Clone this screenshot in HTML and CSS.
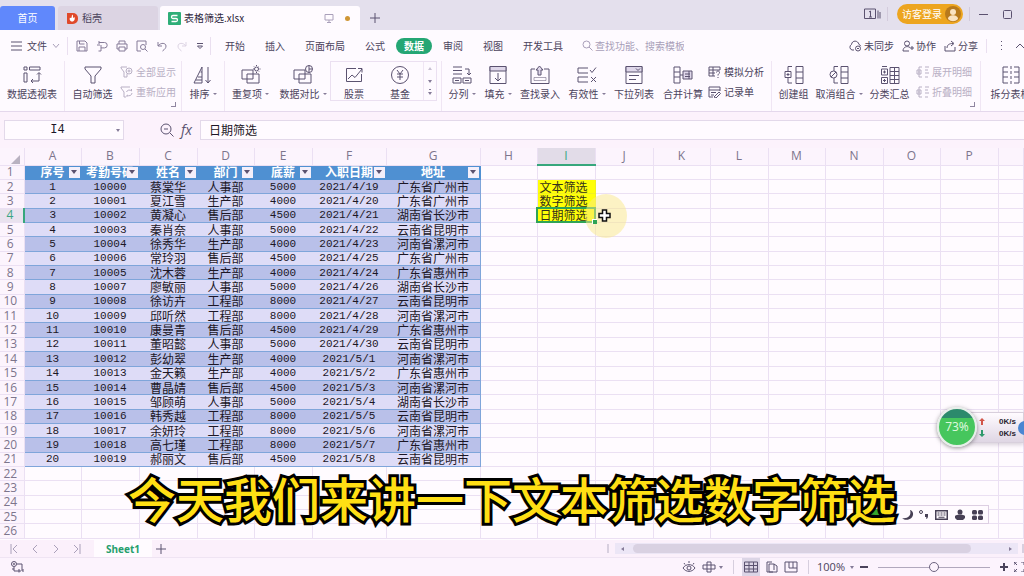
FILE: index.html
```html
<!DOCTYPE html>
<html lang="zh-CN">
<head>
<meta charset="utf-8">
<title>表格筛选.xlsx</title>
<link rel="stylesheet" href="styles.css">
</head>
<body>
<header class="titlebar">
  <button class="tab home">首页</button>
  <button class="tab docer">
    <svg width="11" height="12" viewBox="0 0 11 12"><path d="M0 1h6a5 5 0 0 1 5 5v1a5 5 0 0 1-5 5H1a1 1 0 0 1-1-1z" fill="#e0492a"/><path class="w" d="M5.5 2.5c1 1.500 0 2.500 1 3.500l1-1c.8 2-.2 4.500-2.200 4.500S2 7.500 3 5.500c.8.800 1 .8 1.500 0s0-2 1-3z"/></svg>
    稻壳
  </button>
  <button class="tab doc">
    <svg width="13" height="13" viewBox="0 0 13 13"><rect width="13" height="13" rx="1" fill="#2fae78"/><path d="M9.500 3.500H5a1.500 1.500 0 0 0 0 3h3a1.500 1.500 0 0 1 0 3H3.500" fill="none" stroke="#fff" stroke-width="1.300"/></svg>
    <span>表格筛选.xlsx</span>
    <svg class="line faint push" width="10" height="10" viewBox="0 0 10 10"><path d="M1 1.500h8v5.500H1zM5 7v2M3 9.500h4"/></svg>
    <i class="unsaved"></i>
  </button>
  <button class="newtab" aria-label="新建"><svg class="line" width="10" height="10" viewBox="0 0 10 10"><path d="M5 0v10M0 5h10"/></svg></button>
  <div class="window">
    <svg class="line" width="17" height="12" viewBox="0 0 17 12"><path d="M.5 1h11v9.500H.500zM14 2.500v8M16 4v6.500M5 4l1.500-1v6M5 9h3"/></svg>
    <i class="sep"></i>
    <button class="login">访客登录
      <svg width="16" height="16" viewBox="0 0 16 16"><circle cx="8" cy="8" r="8" fill="#b87a1c"/><circle cx="8" cy="6" r="3" fill="#fbe3c0"/><path d="M3 13c0-5 10-5 10 0-3 3-7 3-10 0z" fill="#fbe3c0"/></svg>
    </button>
    <i class="sep"></i>
    <button aria-label="最小化"><svg class="line" width="9" height="9" viewBox="0 0 9 9"><path d="M0 4.500h9"/></svg></button>
    <button class="maximize" aria-label="最大化"><svg class="line" width="9" height="9" viewBox="0 0 9 9"><rect x=".5" y=".5" width="8" height="8" rx="1"/></svg></button>
  </div>
</header>

<nav class="menubar">
  <button class="file">
    <svg class="line" width="11" height="10" viewBox="0 0 11 10"><path d="M0 1h11M0 5h11M0 9h11"/></svg>
    文件
    <svg class="line faint" width="8" height="6" viewBox="0 0 8 6"><path d="M1 1l3 3.500L7 1"/></svg>
  </button>
  <div class="quick">
    <button aria-label="保存"><svg class="line soft" width="12" height="12" viewBox="0 0 12 12"><path d="M1 1h8l2 2v8H1zM3.500 1v3h5M3 11V7h6v4"/></svg></button>
    <button aria-label="输出"><svg class="line soft" width="12" height="12" viewBox="0 0 12 12"><path d="M3 2.500h5.500a2.700 2.700 0 0 1 0 5.400H5V11H2.500M1 5h3M3 1v3M5 8V5"/></svg></button>
    <button aria-label="打印"><svg class="line soft" width="12" height="12" viewBox="0 0 12 12"><path d="M3 4V1h6v3M3 9H1V4h10v5H9M3 7h6v4H3z"/></svg></button>
    <button aria-label="预览"><svg class="line soft" width="12" height="12" viewBox="0 0 12 12"><path d="M5 11H1V1h9v4"/><circle cx="7" cy="7" r="2.500"/><path d="M9 9l2.500 2.500"/></svg></button>
    <button aria-label="撤销"><svg class="line soft" width="12" height="12" viewBox="0 0 12 12"><path d="M2 2v4h4M2 6c3-4 8-3 8 0 0 2-1 3-3.500 5"/></svg></button>
    <button aria-label="恢复"><svg class="line ghost" width="12" height="12" viewBox="0 0 12 12"><path d="M10 2v4H6M10 6C7 2 2 3 2 6c0 2 1 3 3.500 5"/></svg></button>
    <button aria-label="更多"><svg class="line" width="8" height="8" viewBox="0 0 8 8"><path d="M1 1.500h6M1.500 4L4 6.500 6.500 4z"/></svg></button>
  </div>
  <div class="menus">
    <button>开始</button><button>插入</button><button>页面布局</button><button>公式</button><button class="on">数据</button><button>审阅</button><button>视图</button><button>开发工具</button>
  </div>
  <label class="search">
    <svg class="line faint" width="11" height="11" viewBox="0 0 11 11"><circle cx="4.500" cy="4.500" r="3.500"/><path d="M7 7l3.500 3.500"/></svg>
    <input type="search" aria-label="搜索" placeholder="查找功能、搜索模板">
  </label>
  <div class="share">
    <button><svg class="line" width="14" height="12" viewBox="0 0 14 12"><path d="M6 10H4a3 3 0 0 1-.5-5.500C4 0 10 0 11 4.500c1 .3 1.500 1 1.700 1.700"/><circle cx="10" cy="8.500" r="2.500"/><path d="M9 8.500h2"/></svg>未同步</button>
    <button><svg class="line" width="12" height="12" viewBox="0 0 12 12"><circle cx="5" cy="3.500" r="2.500"/><path d="M8 7.500c-3-2-7-.5-7 3.500h6M10 6v4M8 8h4"/></svg>协作</button>
    <button><svg class="line" width="12" height="12" viewBox="0 0 12 12"><path d="M1 6v5h10V7M3 8c0-3 2-4.500 6-4.500M7 1l3 2.500L7 6"/></svg>分享</button>
    <i class="sep"></i>
    <button aria-label="更多选项"><svg width="3" height="12" viewBox="0 0 3 12"><path d="M1 1h1v1H1zM1 5h1v1H1zM1 9h1v1H1z" fill="#5b5270"/></svg></button>
    <button aria-label="折叠"><svg class="line" width="8" height="6" viewBox="0 0 8 6"><path d="M0 5l4-4 4 4"/></svg></button>
  </div>
</nav>

<div class="ribbon">
  <button class="tool"><svg class="line" width="20" height="20" viewBox="0 0 20 20"><path d="M2 2h3v3H2zM7.500 2H18v3H7.500zM2 8h3v9H2zM17 8v8H9M15 9.500L17 7.500l2 2M11 14l-2 2 2 2"/></svg>数据透视表</button>
  <button class="tool cut"><svg class="line" width="20" height="20" viewBox="0 0 20 20"><path d="M2 2h16v2l-6 7v7H8v-7L2 4z"/></svg>自动筛选</button>
  <div class="stack dim corner">
    <button><svg class="line" width="13" height="12" viewBox="0 0 13 12"><path d="M7 1H1v1l3 4v5h3V8"/><circle cx="9" cy="5" r="3"/><circle cx="9" cy="5" r="1"/></svg>全部显示</button>
    <button><svg class="line" width="13" height="12" viewBox="0 0 13 12"><path d="M10 1H1v1l3 4v5h2M6.500 6a3 3 0 0 1 5-1V3M12 7a3 3 0 0 1-5 2v2"/></svg>重新应用</button>
  </div>
  <button class="tool cut"><svg class="line" width="20" height="20" viewBox="0 0 20 20"><path d="M1 18L9 2v16zM5 12h4M7.500 7H9M3 15h6M15 2v16M12.500 15l2.500 3 2.500-3"/></svg><span>排序<i class="caret"></i></span></button>
  <button class="tool cut"><svg class="line" width="20" height="20" viewBox="0 0 20 20"><path d="M1 5h11v9H1zM6 9h12v9H6z"/><circle cx="15.500" cy="4" r="2"/><path d="M15.500 0v1M15.500 7v1M12 4h1M18.500 4h1M13 1.500l.7.700M18 1.500l-.7.700M18 6.500l-.7-.7"/></svg><span>重复项<i class="caret"></i></span></button>
  <button class="tool"><svg class="line" width="20" height="20" viewBox="0 0 20 20"><path d="M1 5h11v9H1zM6 9h12v9H6z"/><circle cx="16" cy="4" r="3.500"/><path d="M16 .5v7M16 4h3"/></svg><span>数据对比<i class="caret"></i></span></button>
  <div class="gallery">
    <button class="tool"><svg class="line" width="20" height="20" viewBox="0 0 20 20"><path d="M12 3.500H2.500v13h15V9M4 14l4-4 3 2.500L18 4M14 3.500h4v4"/></svg>股票</button>
    <button class="tool"><svg class="line" width="20" height="20" viewBox="0 0 20 20"><circle cx="10" cy="10" r="8.500"/><path d="M7 5l3 4 3-4M7 9h6M7 12h6M10 9v6"/></svg>基金</button>
    <div class="spin"><button aria-label="上"><i class="caret up"></i></button><button aria-label="下"><i class="caret"></i></button><button aria-label="全部"><i class="caret bar"></i></button></div>
  </div>
  <button class="tool cut"><svg class="line" width="20" height="20" viewBox="0 0 20 20"><path d="M1 2h9M1 5.500h9M1 9h9M1 13h8v5H1zM11 13h8v5h-8zM13 4h4v6M15 8l2 2 2-2M3 15.500h4M13 15.500h4"/></svg><span>分列<i class="caret"></i></span></button>
  <button class="tool"><svg class="line" width="20" height="20" viewBox="0 0 20 20"><path d="M2 1.500h16v17H2z"/><path class="shade" d="M2 1.500h16V6H2z"/><path d="M10 8v8M7 13l3 3 3-3"/></svg><span>填充<i class="caret"></i></span></button>
  <button class="tool"><svg class="line" width="20" height="20" viewBox="0 0 20 20"><path d="M5 4H1v14.500h18V4h-5"/><path class="shade" d="M8 10V5H6l3.500-4L13 5h-2v5z"/><path d="M4 12.500h12v3H4z" opacity=".5"/></svg>查找录入</button>
  <button class="tool"><svg class="line" width="20" height="20" viewBox="0 0 20 20"><path d="M11 3H1v5h10M11 12H1v5h10M13 5l2 2.500 4-5M14 12l5 5M19 12l-5 5"/></svg><span>有效性<i class="caret"></i></span></button>
  <button class="tool"><svg class="line" width="20" height="20" viewBox="0 0 20 20"><path d="M2 1.500h16v17H2z"/><path class="shade" d="M2 1.500h16V7H2z"/><path d="M12 3.500l2 2 2-2M5 10.500h10M5 14.500h7"/></svg>下拉列表</button>
  <button class="tool"><svg class="line" width="20" height="20" viewBox="0 0 20 20"><path d="M1 2h6v16H1zM1 7h6M1 12h6"/><path class="shade" d="M10 6h9v8h-9z"/><path d="M7 10h3M12 9h5M12 11.500h5M16 6v8"/></svg>合并计算</button>
  <div class="stack">
    <button><svg class="line" width="13" height="12" viewBox="0 0 13 12"><path d="M7 10H1V1h11v3M1 4h11M1 7h6M5 1v9M8.500 6.500c0-2 3-2 3 0 0 1.500-1.500 1-1.500 3M10 11v1"/></svg>模拟分析</button>
    <button><svg class="line" width="13" height="12" viewBox="0 0 13 12"><path d="M5 11H1V1h11v4M1 4h11M3 6.500h5M3 9h3M6 11l5-5 1.500 1.500L8 12z"/></svg>记录单</button>
  </div>
  <button class="tool cut"><svg class="line" width="20" height="20" viewBox="0 0 20 20"><path d="M8 1.500H4V6M4 13v5h4M12 1.500h7v17h-7zM12 7h7M12 13h7M1 6.500h6v6H1zM2.500 9.500h3M4 8v3"/></svg>创建组</button>
  <button class="tool"><svg class="line" width="20" height="20" viewBox="0 0 20 20"><path d="M9 1.500H5V6M5 13v5h4M12 1.500h7v17h-7zM12 7h7M12 13h7"/><circle cx="4.500" cy="9.500" r="3.500"/><path d="M2 12l5-5"/></svg><span>取消组合<i class="caret"></i></span></button>
  <button class="tool"><svg class="line" width="20" height="20" viewBox="0 0 20 20"><path d="M7 1.500H2M10 2.500h9v16h-9zM10 6.500h9M10 10.500h9M10 14.500h9M14.500 2v16M1.500 4h6v6h-6zM1.500 12.500h6v6h-6zM3 7h3M4.500 5.500v3M3 15.500h3M4.500 14v3"/></svg>分类汇总</button>
  <div class="stack dim corner">
    <button><svg class="line" width="13" height="12" viewBox="0 0 13 12"><path d="M6 1H3v10h3M1 4h4v4H1zM2 6h2M9 1h4M9 4h3M9 7h4M9 11h3"/></svg>展开明细</button>
    <button><svg class="line" width="13" height="12" viewBox="0 0 13 12"><path d="M6 1H3v10h3M1 4h4v4H1zM2 6h2M9 1h4M9 4h3M9 7h4M9 11h3"/></svg>折叠明细</button>
  </div>
  <button class="tool cut"><svg class="line" width="20" height="20" viewBox="0 0 20 20"><path d="M7 2H2v16h5M2 7h5M2 12h5M13 2h5v16h-5M13 7h5M13 12h5"/><path d="M10 1v18" stroke-dasharray="3 2"/></svg>拆分表格</button>
</div>

<div class="formula">
  <label class="namebox"><input aria-label="名称框" value="I4"><i class="caret"></i></label>
  <div class="fx">
    <svg class="line" width="14" height="14" viewBox="0 0 14 14"><circle cx="6" cy="6" r="5"/><path d="M10 10l3.500 3.500M4 6h4"/></svg>
    <span>fx</span>
  </div>
  <input class="content" aria-label="编辑栏" value="日期筛选">
</div>

<main class="sheet">
  <table id="grid"></table>
</main>

<footer>
  <div class="sheetbar">
    <div class="pager">
      <button aria-label="第一张"><svg class="line faint" width="8" height="10" viewBox="0 0 8 10"><path d="M1 0v10M7 1L3 5l4 4"/></svg></button>
      <button aria-label="上一张"><svg class="line faint" width="8" height="10" viewBox="0 0 8 10"><path d="M6 1L2 5l4 4"/></svg></button>
      <button aria-label="下一张"><svg class="line faint" width="8" height="10" viewBox="0 0 8 10"><path d="M2 1l4 4-4 4"/></svg></button>
      <button aria-label="最后一张"><svg class="line faint" width="8" height="10" viewBox="0 0 8 10"><path d="M7 0v10M1 1l4 4-4 4"/></svg></button>
    </div>
    <button class="sheettab">Sheet1</button>
    <button class="addsheet" aria-label="新建工作表"><svg class="line" width="10" height="10" viewBox="0 0 10 10"><path d="M5 0v10M0 5h10"/></svg></button>
    <i class="grip"></i>
    <div class="scroll"><i class="caret left"></i><i class="thumb"></i><i class="caret right"></i></div>
    <i class="grip end"></i>
  </div>
  <div class="status">
    <svg class="line" width="14" height="12" viewBox="0 0 14 12"><circle cx="4" cy="3" r="2.500"/><circle cx="4" cy="3" r=".6"/><path d="M7 3h5v7M4 6v4h7M2 8h2M9 8v3.500M13 8v3"/></svg>
    <div class="views">
      <svg class="line" width="14" height="12" viewBox="0 0 14 12"><path d="M1 7c3-4.500 9-4.500 12 0-3 4.500-9 4.500-12 0zM2 2l1 1.500M7 0v2M12 2l-1 1.500"/><circle cx="7" cy="7" r="2"/></svg>
      <svg class="line" width="14" height="12" viewBox="0 0 14 12"><path d="M5 1h4v10H5zM1 4h12v4H1z"/></svg>
      <i class="caret"></i>
      <i class="sep"></i>
      <button class="on" aria-label="普通视图"><svg class="line" width="14" height="12" viewBox="0 0 14 12"><path d="M.5 1h13v10H.500zM.5 4.500h13M.5 8h13M5 1v10M9.500 1v10"/></svg></button>
      <button aria-label="页面布局视图"><svg class="line" width="12" height="12" viewBox="0 0 12 12"><path d="M7 11H1V1h5M3 3h5l3 2v6H3zM8 3v6"/></svg></button>
      <button aria-label="分页预览"><svg class="line" width="14" height="12" viewBox="0 0 14 12"><path d="M1 1h12v10H1zM5 1v6h8M9 1v6"/></svg></button>
      <i class="sep"></i>
      <button class="percent">100%<i class="caret"></i></button>
      <button aria-label="缩小"><svg class="bold" width="8" height="8" viewBox="0 0 8 8"><path d="M0 4h8"/></svg></button>
      <input type="range" aria-label="缩放" min="0" max="200" value="100">
      <button aria-label="放大"><svg class="bold" width="8" height="8" viewBox="0 0 8 8"><path d="M0 4h8M4 0v8"/></svg></button>
      <button aria-label="全屏"><svg class="line" width="10" height="10" viewBox="0 0 10 10"><path d="M0 3V0h3M0 0l3 3M10 3V0H7M0 7v3h3M0 10l3-3M10 7v3H7"/></svg></button>
    </div>
  </div>
</footer>

<aside class="meter">
  <div class="ball">73%</div>
  <svg width="6" height="24" viewBox="0 0 6 24"><path d="M3 2L0 5h2v4h2V5h2z" fill="#d2564a"/><path d="M3 21l-3-3h2v-4h2v4h2z" fill="#2f9a6c"/></svg>
  <div class="speed"><span>0K/s</span><span>0K/s</span></div>
  <i class="assist"></i>
</aside>

<div class="ime">
  <i class="leaf"></i>
  <svg width="84" height="14" viewBox="0 0 84 14" fill="#474055"><path d="M8 2c2 6-3 9-8 8 4 4 12 1 11-5-.5-2-2-3-3-3z"/><circle cx="19" cy="4" r="1.500" fill="none" stroke="#474055"/><path d="M23 6h3v2c0 2-1 3-2 3 .5-1 .5-2 0-2h-1z"/><path fill-rule="evenodd" d="M33 2h13v10H33zM34.500 3.500v7h10v-7z"/><path d="M35.500 4.500h2v1h-2zM38.500 4.500h2v1h-2zM41.500 4.500h2v1h-2zM35.500 6.500h2v1h-2zM38.500 6.500h2v1h-2zM41.500 6.500h2v1h-2zM36.500 8.700h6v1h-6z"/><circle cx="58" cy="4" r="2.500"/><path d="M53 8c2-2 8-2 10 0v2l-2 2h-6l-2-2z"/><rect x="70" y="2" width="5" height="4.500" rx="1.500"/><rect x="76" y="2" width="5" height="4.500" rx="1.500"/><rect x="70" y="7.500" width="5" height="4.500" rx="1.500"/><rect x="76" y="7.500" width="5" height="4.500" rx="1.500"/></svg>
</div>

<p class="caption">今天我们来讲一下文本筛选数字筛选</p>
<script src="sheet.js"></script>
</body>
</html>
```

FILE: styles.css
```css
* { box-sizing: border-box; }
html, body { height: 100%; margin: 0; }
body {
  display: flex;
  flex-direction: column;
  position: relative;
  overflow: hidden;
  background: #fefaff;
  color: #4b435c;
  font: 10px/14px "Noto Sans CJK SC", sans-serif;
  white-space: nowrap;
}
button, input {
  font: inherit;
  color: inherit;
  margin: 0;
  padding: 0;
  border: 0;
  background: none;
  outline: 0;
}
button { display: flex; align-items: center; white-space: nowrap; }
svg { display: block; flex: none; }
i { flex: none; font-style: normal; }
.line { fill: none; stroke: #5b5270; stroke-width: 1; }
.bold { fill: none; stroke: #4b435c; stroke-width: 2; }
.soft { stroke: #857b98; }
.faint { stroke: #aaa0ba; }
.ghost { stroke: #ddd4e4; }
.shade { fill: #dfd7ea; }
.w { fill: #fff; }
.sep { width: 1px; height: 14px; background: #d6cede; }
.caret {
  display: inline-block;
  border: 2px solid transparent;
  border-top: 3px solid #857b98;
  border-bottom: 0;
}
.caret.up { border-top: 0; border-bottom: 3px solid #c8c0d2; }
.caret.left { border: 2px solid transparent; border-right: 3px solid #857b98; border-left: 0; }
.caret.right { border: 2px solid transparent; border-left: 3px solid #857b98; border-right: 0; }

/* title bar */
.titlebar { display: flex; flex: none; height: 30px; padding-top: 6px; background: #e4e0ed; }
.tab { height: 24px; border-radius: 3px 3px 0 0; }
.home { width: 55px; justify-content: center; background: #6088fc; color: #fff; }
.docer { width: 100px; margin: 0 2px 0 3px; padding-left: 9px; gap: 4px; background: #dcd4e3; }
.doc { width: 200px; padding: 0 10px 0 8px; gap: 3px; background: #fffbff; color: #2f2840; }
.push { margin-left: auto; }
.unsaved { width: 5px; height: 5px; margin-left: 8px; border-radius: 50%; background: #cf9635; }
.newtab { padding: 0 10px; }
.window { display: flex; align-items: center; gap: 6px; height: 20px; margin: -2px 12px 0 auto; }
.login { height: 20px; padding: 0 2px 0 5px; gap: 3px; border-radius: 10px; background: #eda51f; color: #fff; }
.window .sep { background: #d3cbdc; }
.window .sep + button { margin-left: 3px; }
.window .maximize { margin-left: 9px; }

/* menu bar */
.menubar { display: flex; flex: none; align-items: center; height: 31px; padding-left: 11px; }
.file { gap: 5px; padding-right: 7px; }
.quick { display: flex; align-items: center; gap: 8px; padding: 0 6px 0 8px; border: solid #eadff0; border-width: 0 1px; height: 18px; }
.menus { display: flex; align-items: center; padding-left: 4px; }
.menus button { padding: 0 10px; }
.menus .on { height: 16px; margin: 0 1px; padding: 0 8px; border-radius: 8px; background: #24a674; color: #fff; font-weight: bold; }
.search { display: flex; align-items: center; gap: 2px; margin-left: 9px; }
.search input { width: 100px; height: 14px; }
.search input::placeholder { color: #a99fb9; opacity: 1; }
.share { display: flex; align-items: center; gap: 8px; margin-left: auto; }
.share button { gap: 2px; }
.share .sep { background: #eadff0; }
.share .sep + button { margin: 0 5px; }

/* ribbon */
.ribbon {
  display: grid;
  flex: none;
  grid-template-columns: 64px 56px 61px 43px 52px 54px 111px 41px 32px 52px 42px 52px 46px 65px 44px 48px 53px 64px 60px;
  height: 51px;
  overflow: hidden;
  border-bottom: 1px solid #e4d8ec;
}
.tool { flex-direction: column; justify-content: flex-start; gap: 2px; padding-top: 4px; }
.tool .caret { margin: 0 0 3px 3px; border-top-width: 2px; }
.cut { border-left: 1px solid #f0e6f4; }
.stack { position: relative; display: flex; flex-direction: column; gap: 6px; padding-top: 4px; }
.stack button { gap: 3px; }
.stack:not(.dim) { padding-left: 2px; }
.dim { color: #b8afc4; }
.dim .line { stroke: #b8afc4; }
.corner::after { content: ""; position: absolute; right: 5px; bottom: 4px; width: 4px; height: 4px; border: solid #8f85a0; border-width: 0 1px 1px 0; }
.gallery { display: flex; width: 107px; height: 40px; border: 1px solid #ebe0f1; }
.gallery .tool { flex: 1; padding-top: 3px; }
.spin { display: flex; flex-direction: column; width: 13px; border-left: 1px solid #f0e6f4; }
.spin button { flex: 1; justify-content: center; }
.bar { box-shadow: 0 -4px 0 -1px #857b98; }

/* formula bar */
.formula { display: flex; flex: none; align-items: center; height: 36px; padding-left: 4px; background: #fcf2fc; color: #1c1726; }
.namebox { display: flex; align-items: center; width: 120px; height: 20px; padding-right: 3px; background: #fffbff; border: 1px solid #e3d9ea; }
.namebox input { flex: 1; min-width: 0; padding-right: 6px; text-align: center; font: 12px/16px "Liberation Mono", monospace; }
.fx { display: flex; align-items: center; gap: 7px; width: 76px; padding-left: 36px; }
.fx span { font: italic 14px/16px "Open Sans", sans-serif; color: #5b5270; }
.content { flex: 1; min-width: 0; height: 20px; padding: 0 8px 2px; font-size: 12px; background: #fffbff; border: 1px solid #e3d9ea; border-right: 0; }

/* grid */
.sheet { flex: 1; min-height: 0; padding-bottom: 1px; background: #fffbff; }
.sheet table { width: 100%; height: 100%; table-layout: fixed; border-collapse: collapse; }
.sheet td, .sheet th { padding: 0; border: 1px solid #ebe0f3; text-align: center; font-size: 12px; line-height: 12px; }
.sheet thead th, .sheet tbody th { font: 12px/12px "Open Sans", sans-serif; color: #7d758c; background: #fcf4fd; }
.sheet thead th { height: 17px; border-top: 0; }
.sheet tbody th { text-align: center; border-left: 0; padding-right: 3px; }
.sheet thead .col { background: #e2dce8; color: #3aa583; border-bottom: 2px solid #36a77c; }
.sheet tbody .row { background: #e9e2ee; color: #3aa583; border-right: 2px solid #36a77c; }
.sheet .all { position: relative; border-left: 0; }
.all::after { content: ""; position: absolute; right: 4px; bottom: 1px; border: solid transparent; border-width: 0 0 9px 9px; border-bottom-color: #b9b2c1; }
.sheet .head { position: relative; background: #4f90d2; border-color: #4f90d2; color: #fff; font-weight: bold; }
.filter { position: absolute; right: 1px; top: 1px; width: 11px; height: 11px; justify-content: center; background: #f4effa; }
.filter .caret { border-width: 4px 3px 0; border-top-color: #5b5270; }
.sheet .rec { color: #1c1726; border-color: #7fa5da; border-left-color: transparent; border-right-color: transparent; }
.sheet .odd { background: #b9c0e9; }
.sheet .even { background: #dedcf7; }
.sheet .num { font: 11px/12px "Liberation Mono", monospace; }
.sheet .last { border-right: 1px solid #7fa5da; }
.sheet .note { background: #ffff08; color: #33301c; border-color: #f0f020; text-align: left; padding-left: 2px; }
.sheet .cur { position: relative; outline: 2px solid #2fa456; outline-offset: -1px; }
.halo { position: absolute; left: 47px; top: -15px; width: 42px; height: 44px; border-radius: 50%; background: #fae98a80; }
.pointer { position: absolute; left: 60px; top: 0; }
.knob { position: absolute; right: -2px; bottom: -2px; width: 5px; height: 5px; background: #2fa456; border: solid #fff; border-width: 1px 0 0 1px; }

/* sheet tabs */
.sheetbar { display: flex; align-items: center; height: 18px; background: #fbf0fb; border-bottom: 1px solid #efe4f3; }
.pager { display: flex; gap: 13px; padding: 0 13px 0 10px; }
.sheettab { height: 17px; padding: 0 12px; background: #fffbff; color: #25a06d; font: bold 10px/14px "Noto Sans", sans-serif; }
.addsheet { padding: 0 4px; }
.grip { width: 2px; height: 9px; margin: 0 6px 0 auto; background: #d8cfdf; }
.end { margin: 0 0 0 4px; }
.scroll { display: flex; align-items: center; width: 403px; height: 11px; padding: 0 6px; gap: 9px; background: #ece6f6; }
.thumb { width: 338px; height: 9px; border-radius: 5px; background: #d9d1e2; }
.scroll .right { margin-left: auto; }

/* status bar */
.status { display: flex; align-items: center; justify-content: space-between; height: 18px; padding-left: 10px; background: #fcf3fd; overflow: hidden; }
.views { display: flex; align-items: center; gap: 6px; }
.views > .caret { margin-left: -3px; }
.views .sep { margin: 0 2px 0 4px; }
.views .on { height: 18px; padding: 0 2px; background: #dcd5e6; }
.percent { gap: 5px; font: 11px/14px "Open Sans", sans-serif; }
input[type="range"] { appearance: none; width: 112px; height: 12px; margin: 0 4px; background: linear-gradient(#b1a8bd, #b1a8bd) center / 100% 1px no-repeat; }
input[type="range"]::-webkit-slider-thumb { appearance: none; width: 10px; height: 10px; border: 1px solid #6d6480; border-radius: 50%; background: #fcf3fd; }

/* floating speed meter */
.meter { position: absolute; right: 0; top: 412px; display: flex; align-items: center; gap: 3px; width: 68px; height: 31px; padding-left: 22px; background: linear-gradient(#fffbff, #dfd6e4); border: 1px solid #d8cfdc; box-shadow: 0 2px 4px #6a607840; }
.ball { position: absolute; left: -20px; top: -6px; width: 40px; height: 40px; border: 2px solid #e7eee9; border-radius: 50%; background: linear-gradient(#2c8a6c 25%, #46c65d 26%); color: #dcf8dc; font: 12px/36px "Noto Sans", sans-serif; text-align: center; box-shadow: 0 1px 4px #40404090; }
.speed { display: flex; flex-direction: column; margin-left: auto; padding-right: 7px; color: #29232f; font: bold 8px/12px "Liberation Sans", sans-serif; }
.assist { position: absolute; right: -9px; top: 8px; width: 14px; height: 14px; border-radius: 50%; background: #4a86d2; }

/* input method bar */
.ime { position: absolute; right: 35px; bottom: 52px; display: flex; align-items: center; justify-content: flex-end; width: 128px; height: 19px; padding-right: 2px; background: #fffbff; border: 1px solid #ddcfe3; }
.leaf { position: absolute; left: 0; bottom: 0; width: 22px; height: 14px; border-radius: 8px 8px 0 8px; background: #35a52c; }

/* subtitle */
.caption { position: absolute; left: 0; right: 0; bottom: 44px; margin: 0; text-align: center; font-size: 48px; line-height: 70px; font-weight: 500; color: #ffdf14; -webkit-text-stroke: 6px #000; paint-order: stroke fill; }
```

FILE: sheet.js
```js
const widths = [24, 57, 58, 58, 57, 58, 74, 94, 57, 58, 58, 57, 58, 57, 58, 57, 58];
const titles = ["序号", "考勤号码", "姓名", "部门", "底薪", "入职日期", "地址"];
const records = `10000 蔡棠华 人事部 5000 2021/4/19 广东省广州市
10001 夏江雪 生产部 4000 2021/4/20 广东省广州市
10002 黄凝心 售后部 4500 2021/4/21 湖南省长沙市
10003 秦肖奈 人事部 5000 2021/4/22 云南省昆明市
10004 徐秀华 生产部 4000 2021/4/23 河南省漯河市
10006 常玲羽 售后部 4500 2021/4/25 广东省广州市
10005 沈木蓉 生产部 4000 2021/4/24 广东省惠州市
10007 廖敏丽 人事部 5000 2021/4/26 湖南省长沙市
10008 徐访卉 工程部 8000 2021/4/27 云南省昆明市
10009 邱听然 工程部 8000 2021/4/28 河南省漯河市
10010 康曼青 售后部 4500 2021/4/29 广东省惠州市
10011 董昭懿 人事部 5000 2021/4/30 云南省昆明市
10012 彭幼翠 生产部 4000 2021/5/1 河南省漯河市
10013 金天籁 生产部 4000 2021/5/2 广东省惠州市
10014 曹晶婧 售后部 4500 2021/5/3 河南省漯河市
10015 邹顾萌 人事部 5000 2021/5/4 湖南省长沙市
10016 韩秀越 工程部 8000 2021/5/5 云南省昆明市
10017 余妍玲 工程部 8000 2021/5/6 河南省漯河市
10018 高七瑾 工程部 8000 2021/5/7 广东省惠州市
10019 郝丽文 售后部 4500 2021/5/8 云南省昆明市`.split("\n").map((line, i) => [String(i + 1), ...line.split(" ")]);
const notes = { 2: "文本筛选", 3: "数字筛选", 4: "日期筛选" };
const letters = "ABCDEFGHIJKLMNOP".split("");
const active = { row: 4, col: 8 };

const pointer = `<i class="halo"></i><svg class="pointer" width="13" height="13" viewBox="0 0 13 13"><path d="M4.500 1h4v3.500H12v4H8.500V12h-4V8.500H1v-4h3.500z" fill="#fff" stroke="#111" stroke-width="1.500"/></svg><i class="knob"></i>`;

function cell(row, col) {
  if (row === 1 && col < 7) {
    return `<td class="head">${titles[col]}<button class="filter" aria-label="筛选"><i class="caret"></i></button></td>`;
  }
  if (row > 1 && row < 22 && col < 7) {
    const text = records[row - 2][col];
    const kind = /^\d/.test(text) ? " num" : "";
    const edge = col === 6 ? " last" : "";
    return `<td class="rec ${row % 2 ? "even" : "odd"}${kind}${edge}">${text}</td>`;
  }
  if (col === active.col && notes[row]) {
    const current = row === active.row;
    return `<td class="note${current ? " cur" : ""}">${notes[row]}${current ? pointer : ""}</td>`;
  }
  return "<td></td>";
}

let html = "<colgroup>" + widths.map(w => `<col style="width:${w}px">`).join("") + "<col></colgroup>";
html += `<thead><tr><th class="all"></th>` + letters.map((l, i) => `<th${i === active.col ? ' class="col"' : ""}>${l}</th>`).join("") + "<th></th></tr></thead><tbody>";
for (let row = 1; row <= 26; row++) {
  html += `<tr><th${row === active.row ? ' class="row"' : ""}>${row}</th>`;
  for (let col = 0; col <= letters.length; col++) html += cell(row, col);
  html += "</tr>";
}
document.getElementById("grid").innerHTML = html + "</tbody>";
```
